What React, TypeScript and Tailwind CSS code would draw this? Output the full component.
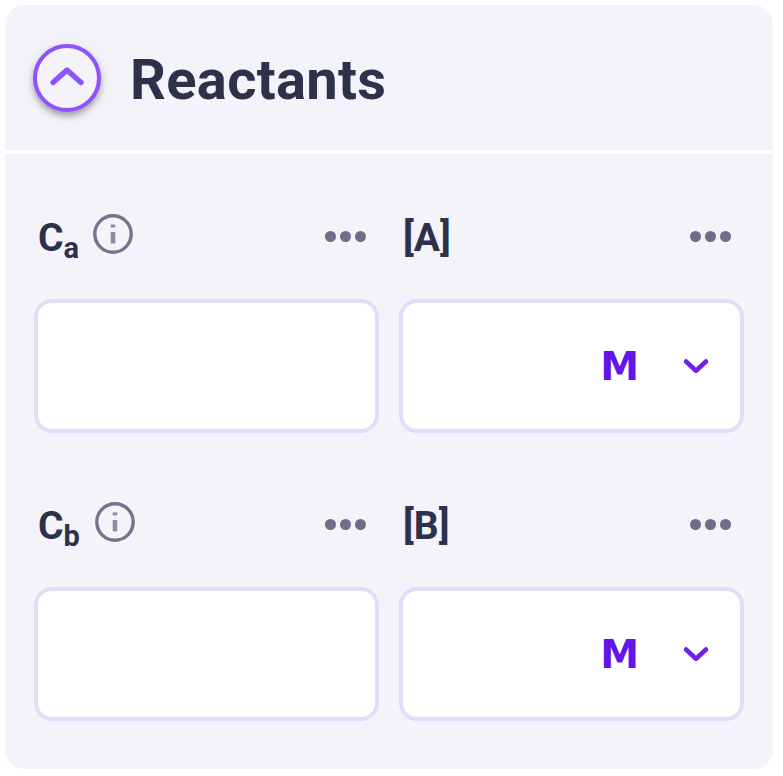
import type { ReactNode } from 'react';

function InfoIcon() {
  return (
    <svg className="mt-[1px] size-10 shrink-0" viewBox="0 0 40 40" fill="none">
      <circle cx="20" cy="20" r="18.2" stroke="#77738f" strokeWidth="3.4" />
      <path d="M20 18v11.4" stroke="#8f8ba6" strokeWidth="4.6" />
      <path d="M20 10.400v3" stroke="#8f8ba6" strokeWidth="4.6" />
    </svg>
  );
}

function Dots() {
  return (
    <div className="mt-[18px] flex h-[11px] gap-1">
      <span className="size-[11px] rounded-full bg-[#706c8a]" />
      <span className="size-[11px] rounded-full bg-[#706c8a]" />
      <span className="size-[11px] rounded-full bg-[#706c8a]" />
    </div>
  );
}

function Field({ label, children }: { label: ReactNode; children?: ReactNode }) {
  return (
    <div className="w-[345px]">
      <div className="flex h-[86px] items-start justify-between pr-[13px] pl-1">
        {label}
        <Dots />
      </div>
      <div className="flex h-[134px] items-center justify-end rounded-[18px] border-[4.5px] border-[#e6dcfa] bg-white pr-[30px]">
        {children}
      </div>
    </div>
  );
}

function Unit() {
  return (
    <>
      <span className="mt-[2px] font-['DejaVu_Sans',sans-serif] text-[39px] leading-[40px] font-bold text-[#6415e6]">M</span>
      <svg className="ml-[43px] h-[18px] w-[28px]" viewBox="0 0 28 18" fill="none">
        <path d="M4 4.500 14 13.700 24 4.500" stroke="#6f20eb" strokeWidth="4.6" strokeLinecap="round" strokeLinejoin="round" />
      </svg>
    </>
  );
}

function Coefficient({ index, gap }: { index: string; gap: string }) {
  return (
    <div className="flex items-start">
      <span className="mt-[2px] text-[39px] leading-[46px] font-bold">C</span>
      <span className="mt-[18px] text-[29px] leading-[34px] font-bold">{index}</span>
      <span className={gap}>
        <InfoIcon />
      </span>
    </div>
  );
}

function Species({ name }: { name: string }) {
  return <span className="mt-[2px] text-[39px] leading-[46px] font-bold">[{name}]</span>;
}

export default function App() {
  return (
    <div className="h-[776px] w-[783px] bg-white pt-[5px] pl-[5px] font-[Roboto,sans-serif] text-[#2d3149]">
      <section className="h-[764px] w-[768px] overflow-hidden rounded-[20px] bg-[#f4f3fa]">
        <header className="flex h-[149px] items-center border-b-[4px] border-white pl-[28px]">
          <button className="flex size-[68px] items-center justify-center rounded-full border-[4.5px] border-[#8f52ff] bg-[#f4f3fa] shadow-[0_4px_6px_rgba(0,0,0,0.32),0_2px_22px_rgba(0,0,0,0.05)]">
            <svg className="mb-[4px] h-[22px] w-[38px] shrink-0" viewBox="0 0 38 22" fill="none">
              <path d="M5 17.500 19 5 33 17.500" stroke="#8f52ff" strokeWidth="5.4" strokeLinecap="round" strokeLinejoin="round" />
            </svg>
          </button>
          <h1 className="mt-[4px] ml-[29px] text-[56px] leading-[64px] font-bold tracking-[0.35px]">Reactants</h1>
        </header>
        <div className="grid grid-cols-[345px_345px] gap-x-5 gap-y-[68px] pt-[59px] pl-[29px]">
          <Field label={<Coefficient index="a" gap="ml-[14px]" />} />
          <Field label={<Species name="A" />}>
            <Unit />
          </Field>
          <Field label={<Coefficient index="b" gap="ml-[15px]" />} />
          <Field label={<Species name="B" />}>
            <Unit />
          </Field>
        </div>
      </section>
    </div>
  );
}
